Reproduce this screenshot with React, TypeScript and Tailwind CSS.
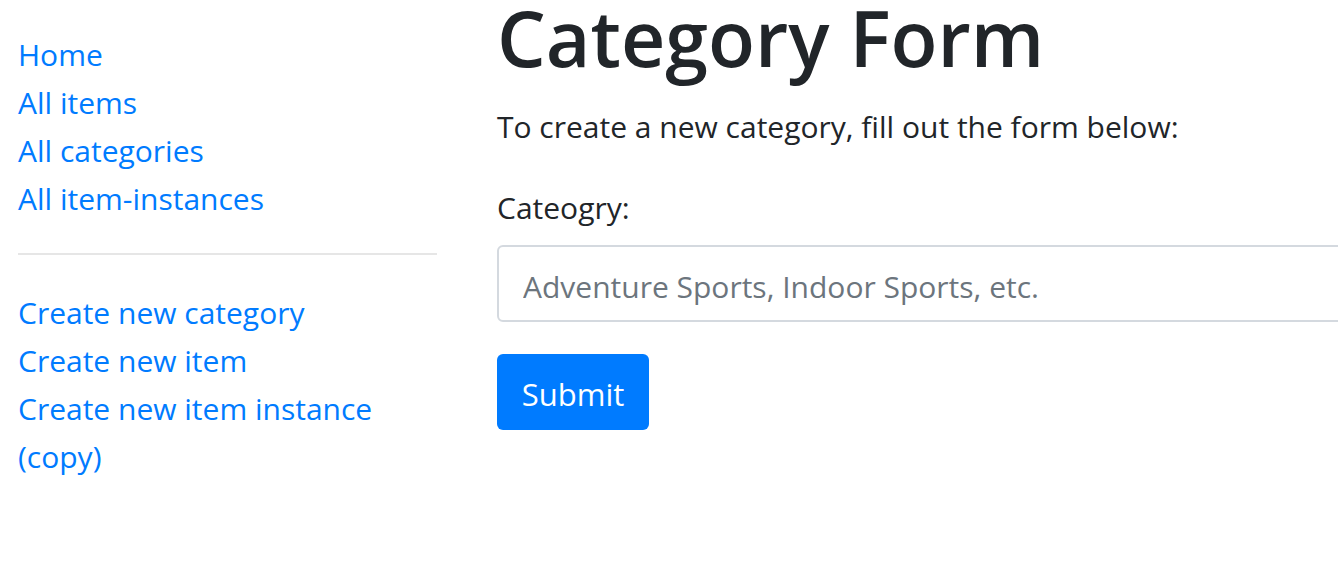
const topLinks = ['Home', 'All items', 'All categories', 'All item-instances'];
const createLinks = ['Create new category', 'Create new item', 'Create new item instance (copy)'];

export default function App() {
  return (
    <div className="flex min-h-[588px] bg-white font-['Open_Sans','Noto_Sans',sans-serif] text-[#212529]">
      <aside className="w-[437px] shrink-0 pl-[18px] pt-[31px]">
        <ul className="text-[30px] leading-[48px] text-[#007bff]">
          {topLinks.map((name) => (
            <li key={name}>
              <a href="#">{name}</a>
            </li>
          ))}
        </ul>
        <hr className="mt-[30px] h-[2px] border-0 bg-[#e6e6e6]" />
        <ul className="mt-[34px] text-[30px] leading-[48px] text-[#007bff]">
          {createLinks.map((name) => (
            <li key={name}>
              <a href="#">{name}</a>
            </li>
          ))}
        </ul>
      </aside>
      <main className="flex-1 overflow-hidden pl-[60px]">
        <h1 className="text-[77px] font-semibold leading-[76px]">Category Form</h1>
        <p className="mt-[33px] text-[30px] leading-[36px]">
          To create a new category, fill out the form below:
        </p>
        <form className="mt-[45px]">
          <label className="block text-[30px] leading-[36px]">Cateogry:</label>
          <input
            type="text"
            placeholder="Adventure Sports, Indoor Sports, etc."
            className="mt-[19px] block h-[77px] w-[860px] rounded-[6px] border-2 border-[#d4d9df] px-[24px] pt-[5px] text-[30px] placeholder:text-[#6c757d]"
          />
          <button
            type="submit"
            className="mt-[32px] h-[76px] w-[152px] rounded-[6px] bg-[#007bff] pt-[4px] text-[31px] text-white"
          >
            Submit
          </button>
        </form>
      </main>
    </div>
  );
}
